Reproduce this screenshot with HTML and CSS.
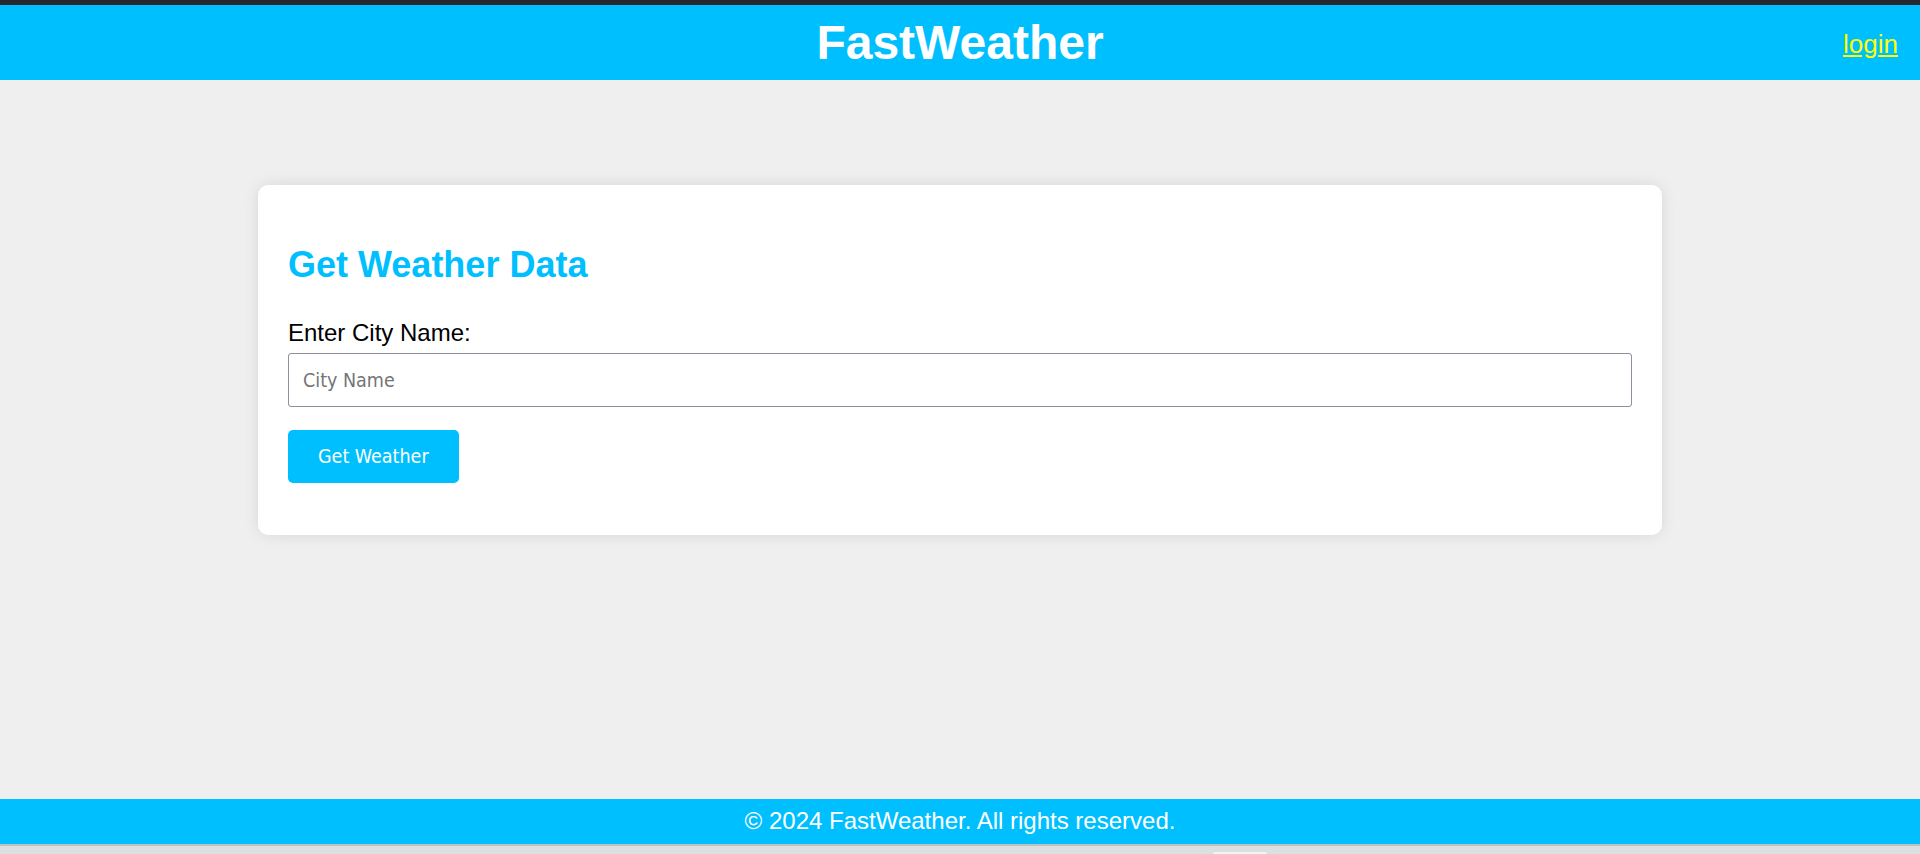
FILE: index.html
```html
<!DOCTYPE html>
<html lang="en">
<head>
<meta charset="utf-8">
<title>FastWeather</title>
<link rel="stylesheet" href="styles.css">
</head>
<body>
<div class="topbar"></div>
<header class="site-header">
  <div class="spacer"></div>
  <h1 class="brand">FastWeather</h1>
  <a class="login" href="#">login</a>
</header>
<main class="main">
  <section class="card">
    <h2 class="card-title">Get Weather Data</h2>
    <form class="weather-form">
      <label class="field-label" for="city">Enter City Name:</label>
      <input class="field-input" id="city" type="text" placeholder="City Name">
      <button class="btn" type="button">Get Weather</button>
    </form>
  </section>
</main>
<footer class="site-footer">© 2024 FastWeather. All rights reserved.</footer>
<div class="bottom-strip"><div class="strip-thumb"></div></div>
</body>
</html>
```

FILE: styles.css
```css
* { box-sizing: border-box; }

html, body {
  margin: 0;
  padding: 0;
}

body {
  height: 854px;
  display: flex;
  flex-direction: column;
  background: #efefef;
  font-family: "Liberation Sans", Arial, sans-serif;
  overflow: hidden;
}

.topbar {
  height: 5px;
  background: #27262e;
  flex: none;
}

.site-header {
  flex: none;
  height: 75px;
  background: #00bfff;
  display: grid;
  grid-template-columns: 1fr auto 1fr;
  align-items: center;
  padding: 0 22px;
}

.brand {
  margin: 0;
  color: #ffffff;
  font-size: 48px;
  font-weight: bold;
  line-height: 55px;
}

.login {
  justify-self: end;
  color: #ffff00;
  font-size: 26px;
  text-decoration: underline;
  line-height: 30px;
  margin-top: 2px;
}

.main {
  flex: 1;
  padding-top: 105px;
}

.card {
  width: 1404px;
  margin: 0 auto;
  background: #ffffff;
  border-radius: 10px;
  box-shadow: 0 0 15px rgba(0, 0, 0, 0.1);
  padding: 30px 30px 22px;
}

.card-title {
  margin: 29px 0 29px;
  color: #00bfff;
  font-size: 36px;
  font-weight: bold;
  line-height: 41px;
}

.weather-form {
  display: flex;
  flex-direction: column;
  align-items: flex-start;
}

.field-label {
  display: block;
  margin-top: 5px;
  margin-bottom: 6px;
  color: #000000;
  font-size: 24px;
  line-height: 28px;
}

.field-input {
  width: 100%;
  height: 54px;
  margin: 0 0 23px;
  padding: 0 14px;
  border: 1px solid #8f8f9d;
  border-radius: 3px;
  background: #ffffff;
  font-family: "DejaVu Sans Condensed", "DejaVu Sans", sans-serif;
  font-stretch: semi-condensed;
  font-size: 19.5px;
  color: #000;
  outline: none;
}

.field-input::placeholder {
  color: #757575;
}

.btn {
  height: 53px;
  padding: 0 30px;
  border: none;
  border-radius: 5px;
  background: #00bfff;
  color: #ffffff;
  font-family: "DejaVu Sans Condensed", "DejaVu Sans", sans-serif;
  font-stretch: semi-condensed;
  font-size: 19.5px;
  cursor: pointer;
  margin-bottom: 30px;
}

.site-footer {
  flex: none;
  height: 45px;
  background: #00bfff;
  color: #ffffff;
  font-size: 24px;
  display: flex;
  align-items: center;
  justify-content: center;
  padding-bottom: 1px;
}

.bottom-strip {
  flex: none;
  height: 10px;
  background: #dcdfe0;
  border-top: 2px solid #c0c0c0;
  display: flex;
  align-items: flex-end;
}

.strip-thumb {
  margin-left: 1213px;
  width: 54px;
  height: 2px;
  background: #f4f4f4;
  border-radius: 3px 3px 0 0;
}
```
